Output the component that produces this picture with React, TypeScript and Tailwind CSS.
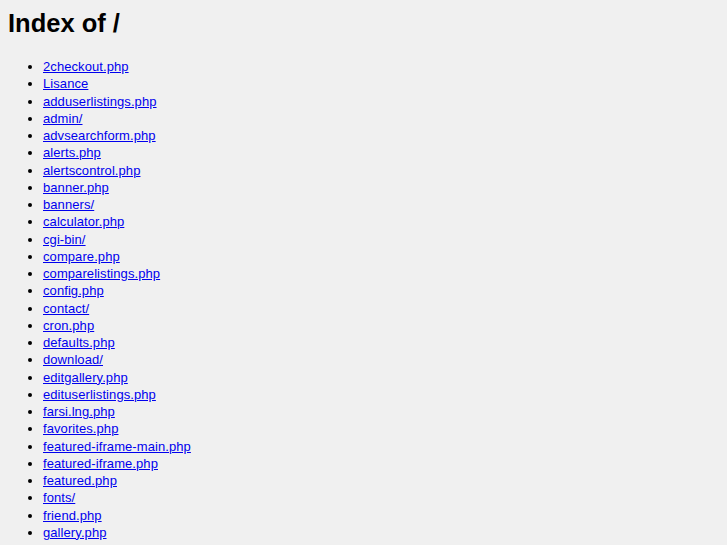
const items = [
  "2checkout.php",
  "Lisance",
  "adduserlistings.php",
  "admin/",
  "advsearchform.php",
  "alerts.php",
  "alertscontrol.php",
  "banner.php",
  "banners/",
  "calculator.php",
  "cgi-bin/",
  "compare.php",
  "comparelistings.php",
  "config.php",
  "contact/",
  "cron.php",
  "defaults.php",
  "download/",
  "editgallery.php",
  "edituserlistings.php",
  "farsi.lng.php",
  "favorites.php",
  "featured-iframe-main.php",
  "featured-iframe.php",
  "featured.php",
  "fonts/",
  "friend.php",
  "gallery.php",
];

export default function App() {
  return (
    <div
      className="min-h-screen bg-[#f0f0f0] p-2 text-black"
      style={{ fontFamily: '"Liberation Sans", Arial, sans-serif' }}
    >
      <h1 className="text-[25.5px] font-bold leading-[30px]">Index of /</h1>
      <ul className="mt-[20px] list-disc pl-[35px]">
        {items.map((name) => (
          <li key={name} className="text-[13px] leading-[17.25px] tracking-[0.08px]">
            <a href={name} className="text-[#0000ee] underline">
              {name}
            </a>
          </li>
        ))}
      </ul>
    </div>
  );
}
